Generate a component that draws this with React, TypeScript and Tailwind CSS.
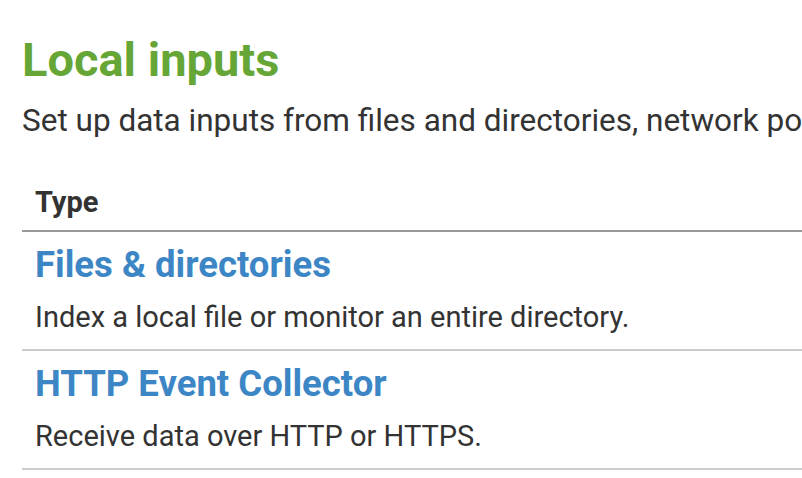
import React from "react";

const rows = [
  { title: "Files & directories", desc: "Index a local file or monitor an entire directory." },
  { title: "HTTP Event Collector", desc: "Receive data over HTTP or HTTPS." },
];

export default function App() {
  return (
    <div
      className="w-[802px] h-[478px] overflow-hidden bg-white pl-[22px] pt-[32px] text-[#333333]"
      style={{ fontFamily: "Roboto, 'Liberation Sans', sans-serif" }}
    >
      <h1 className="text-[47px] leading-[56px] font-bold text-[#65a637]">Local inputs</h1>
      <p className="mt-[13px] text-[31.5px] leading-[40px] whitespace-nowrap">
        Set up data inputs from files and directories, network ports, and scripted inputs.
      </p>
      <div className="mt-[41px] w-[900px]">
        <div className="border-b-2 border-[#999999] pl-[13px] pb-[8px]">
          <span className="text-[29px] leading-[40px] font-bold">Type</span>
        </div>
        {rows.map((r) => (
          <div key={r.title} className="border-b-2 border-[#cccccc] pl-[13px] pt-[13px] pb-[12px] flex flex-col">
            <a className="text-[36.5px] leading-[40px] font-bold text-[#3c86c6]">{r.title}</a>
            <span className="mt-[12px] text-[29px] leading-[40px]">{r.desc}</span>
          </div>
        ))}
      </div>
    </div>
  );
}
